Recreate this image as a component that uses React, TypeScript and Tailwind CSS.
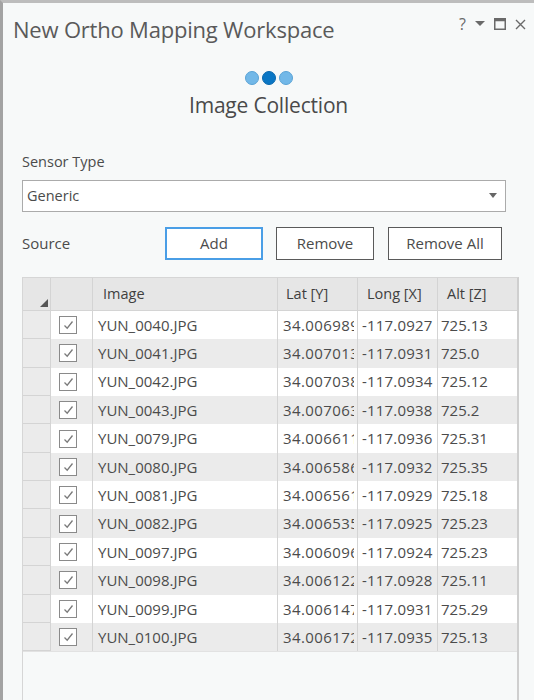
import React from 'react';

type Row = { name: string; lat: string; long: string; alt: string };

const rows: Row[] = [
  { name: 'YUN_0040.JPG', lat: '34.006989', long: '-117.0927', alt: '725.13' },
  { name: 'YUN_0041.JPG', lat: '34.007013', long: '-117.0931', alt: '725.0' },
  { name: 'YUN_0042.JPG', lat: '34.007038', long: '-117.0934', alt: '725.12' },
  { name: 'YUN_0043.JPG', lat: '34.007063', long: '-117.0938', alt: '725.2' },
  { name: 'YUN_0079.JPG', lat: '34.006611', long: '-117.0936', alt: '725.31' },
  { name: 'YUN_0080.JPG', lat: '34.006586', long: '-117.0932', alt: '725.35' },
  { name: 'YUN_0081.JPG', lat: '34.006561', long: '-117.0929', alt: '725.18' },
  { name: 'YUN_0082.JPG', lat: '34.006535', long: '-117.0925', alt: '725.23' },
  { name: 'YUN_0097.JPG', lat: '34.006096', long: '-117.0924', alt: '725.23' },
  { name: 'YUN_0098.JPG', lat: '34.006122', long: '-117.0928', alt: '725.11' },
  { name: 'YUN_0099.JPG', lat: '34.006147', long: '-117.0931', alt: '725.29' },
  { name: 'YUN_0100.JPG', lat: '34.006172', long: '-117.0935', alt: '725.13' },
];

const Checkbox: React.FC = () => (
  <div className="w-[18px] h-[18px] border border-[#8a8a8a] bg-white flex items-center justify-center">
    <svg width="11" height="10" viewBox="0 0 11 10" fill="none">
      <path d="M1.5 5.5 L4.2 8.2 L9.5 1.5" stroke="#7a7a7a" strokeWidth="1.3" />
    </svg>
  </div>
);

const App: React.FC = () => {
  return (
    <div
      className="w-[534px] h-[700px] overflow-hidden bg-[#f7f9f9] border-t-[3px] border-t-[#bdbdbd] border-l-[3px] border-l-[#a3a3a3] flex flex-col text-[#4b4b4b]"
      style={{ fontFamily: '"Open Sans", "Noto Sans", sans-serif' }}
    >
      {/* title bar */}
      <div className="flex items-start justify-between pl-[10px] pr-[8px] h-[48px] pt-[12px]">
        <span className="text-[22px] text-[#5a5a5a] tracking-[-0.2px] leading-[28px]">New Ortho Mapping Workspace</span>
        <div className="flex items-center gap-[9px] text-[#6a6a6a] text-[16px] leading-[20px] mt-[-1px]">
          <span>?</span>
          <svg width="10" height="6" viewBox="0 0 10 6"><path d="M0 0 H10 L5 5 Z" fill="#6a6a6a" /></svg>
          <svg width="12" height="12" viewBox="0 0 12 12" fill="none">
            <rect x="0.75" y="0.75" width="10.5" height="10.5" stroke="#6a6a6a" strokeWidth="1.5" />
            <rect x="0.75" y="0.75" width="10.5" height="2.5" fill="#6a6a6a" />
          </svg>
          <svg width="11" height="11" viewBox="0 0 11 11"><path d="M1 1 L10 10 M10 1 L1 10" stroke="#6a6a6a" strokeWidth="1.4" /></svg>
        </div>
      </div>

      {/* step indicator */}
      <div className="flex flex-col items-center mt-[20px]">
        <div className="flex gap-[3px]">
          <div className="w-[14px] h-[14px] rounded-full bg-[#72b8e8] border border-[#5aa3d6]" />
          <div className="w-[14px] h-[14px] rounded-full bg-[#0a76c4] border border-[#0a68ad]" />
          <div className="w-[14px] h-[14px] rounded-full bg-[#72b8e8] border border-[#5aa3d6]" />
        </div>
        <span className="text-[21px] text-[#4a4a4a] mt-[6px] tracking-[-0.2px] leading-[28px]">Image Collection</span>
      </div>

      {/* sensor type */}
      <div className="pl-[19px] pr-[28px] mt-[32px]">
        <div className="text-[14.5px] text-[#4b4b4b]">Sensor Type</div>
        <div className="mt-[7px] h-[32px] border border-[#ababab] bg-white flex items-center justify-between pl-[4px] pr-[8px]">
          <span className="text-[14.5px]">Generic</span>
          <svg width="8" height="5" viewBox="0 0 8 5"><path d="M0 0 H8 L4 5 Z" fill="#666" /></svg>
        </div>

        <div className="flex items-center mt-[15px]">
          <span className="text-[15px] w-[143px]">Source</span>
          <button className="w-[98px] h-[33px] border-2 border-[#4a9ee6] bg-white text-[15px] text-[#4b4b4b]">Add</button>
          <button className="ml-[13px] w-[98px] h-[33px] border border-[#5a5a5a] bg-white text-[15px] text-[#4b4b4b]">Remove</button>
          <button className="ml-[14px] w-[114px] h-[33px] border border-[#5a5a5a] bg-white text-[15px] text-[#4b4b4b]">Remove All</button>
        </div>
      </div>

      {/* table */}
      <div className="ml-[19px] w-[497px] mt-[17px] flex-1 border-l border-r-[2px] border-t border-[#d6d6d6] border-r-[#cfcfcf] flex flex-col text-[15px]">
        <div className="flex h-[33px] bg-[#e6e6e6] border-b border-[#d4d4d4] text-[14.5px]">
          <div className="w-[28px] border-r border-[#d4d4d4] relative">
            <svg className="absolute right-[2px] bottom-[3px]" width="8" height="8" viewBox="0 0 8 8"><path d="M8 0 V8 H0 Z" fill="#555" /></svg>
          </div>
          <div className="w-[42px] border-r border-[#d4d4d4]" />
          <div className="w-[185px] border-r border-[#d4d4d4] pl-[10px] flex items-center text-[#3f3f3f]">Image</div>
          <div className="w-[80px] border-r border-[#d4d4d4] pl-[8px] flex items-center text-[#3f3f3f]">Lat [Y]</div>
          <div className="w-[80px] border-r border-[#d4d4d4] pl-[9px] flex items-center text-[#3f3f3f]">Long [X]</div>
          <div className="flex-1 pl-[9px] flex items-center text-[#3f3f3f]">Alt [Z]</div>
        </div>
        {rows.map((r, i) => {
          const bg = i % 2 === 0 ? 'bg-white' : 'bg-[#ebebeb]';
          return (
            <div key={r.name} className={`flex h-[28.4px] ${bg}`}>
              <div className="w-[28px] bg-[#ebebeb] border-r border-b border-[#d4d4d4]" />
              <div className="w-[42px] border-r border-[#d4d4d4] flex items-center pl-[8px]">
                <Checkbox />
              </div>
              <div className="w-[185px] border-r border-[#d4d4d4] pl-[5px] flex items-center">{r.name}</div>
              <div className="w-[80px] border-r border-[#d4d4d4] pl-[5px] flex items-center">
                <span className="block w-[71px] overflow-hidden whitespace-nowrap tracking-[0.4px]">{r.lat}</span>
              </div>
              <div className="w-[80px] border-r border-[#d4d4d4] pl-[4px] flex items-center overflow-hidden whitespace-nowrap tracking-[0.2px]">{r.long}</div>
              <div className="flex-1 pl-[3px] flex items-center">{r.alt}</div>
            </div>
          );
        })}
        <div className="flex-1 border-t border-[#e2e2e2]" />
      </div>
    </div>
  );
};

export default App;
